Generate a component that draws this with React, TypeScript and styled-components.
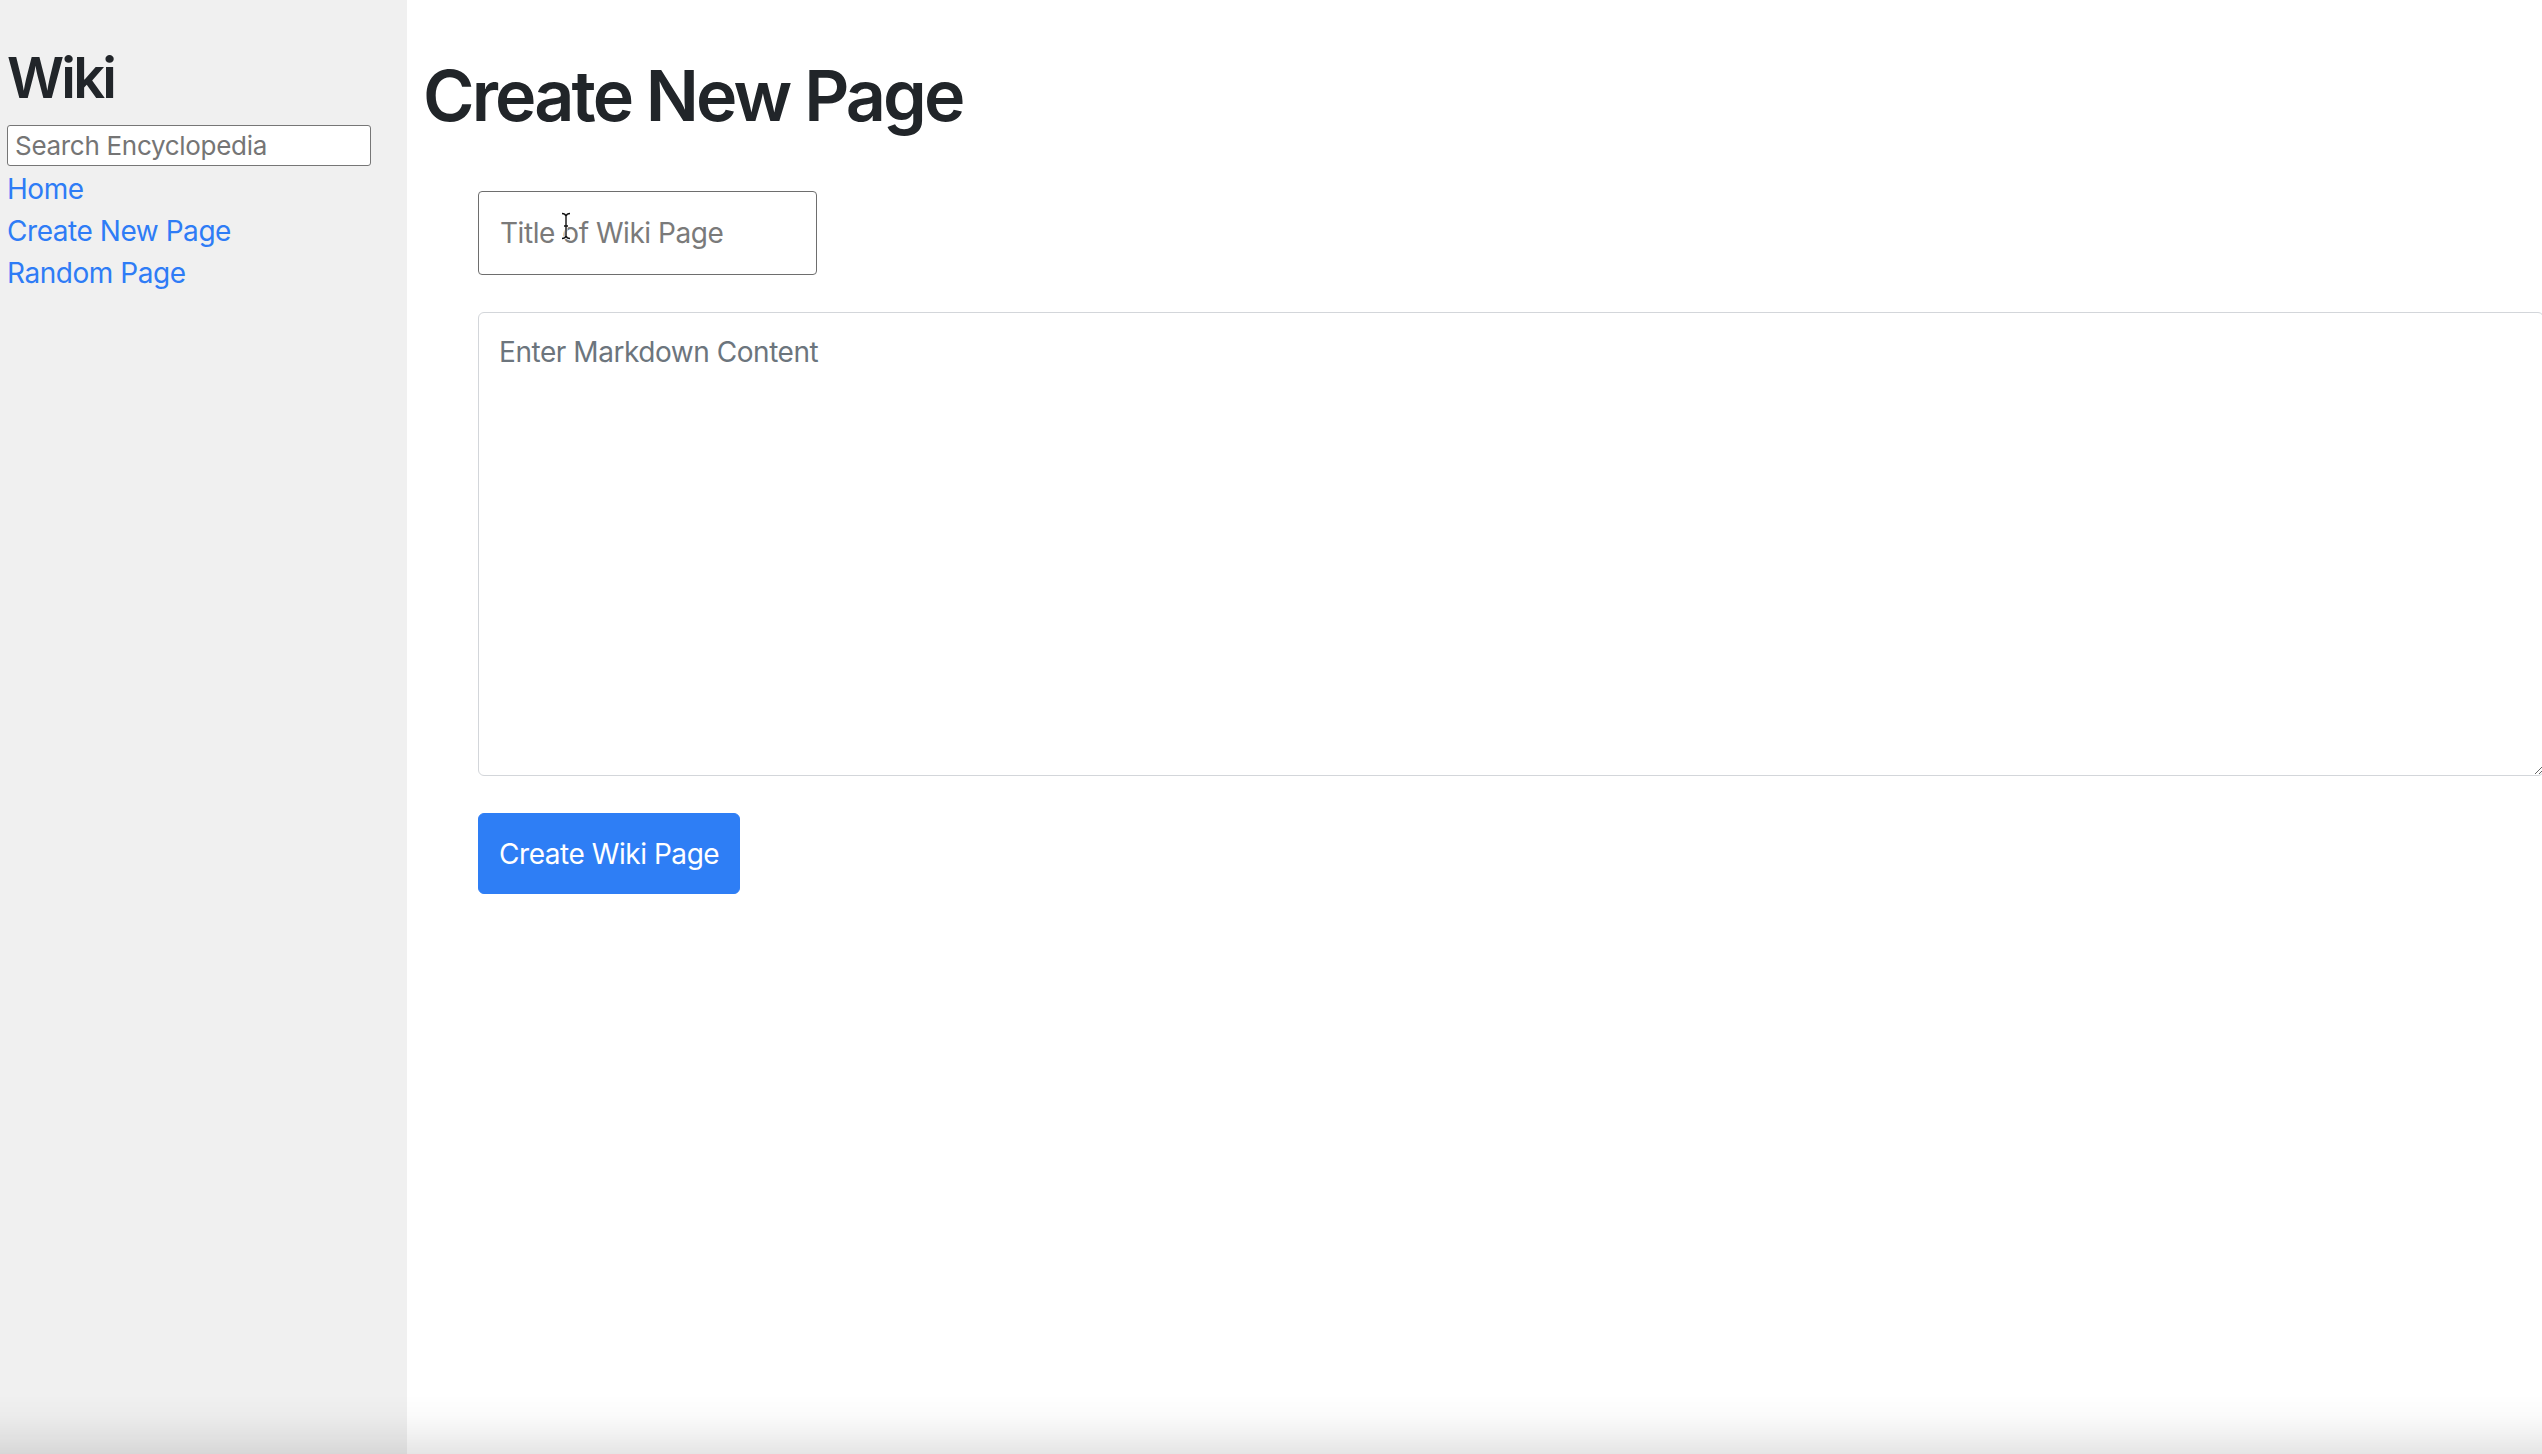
import React from "react";
import styled, { createGlobalStyle } from "styled-components";

const GlobalStyle = createGlobalStyle`
  html, body {
    margin: 0;
    padding: 0;
    height: 100%;
    overflow: hidden;
    background: #ffffff;
  }
  body {
    font-family: Inter, "Noto Sans", "Liberation Sans", sans-serif;
    color: #212529;
    font-size: 28px;
    line-height: 1.5;
  }
  * { box-sizing: border-box; }
`;

const Layout = styled.div`
  display: flex;
  min-height: 100vh;
  width: 100%;
`;

const Sidebar = styled.aside`
  flex: 0 0 407px;
  width: 407px;
  min-height: 100vh;
  background: #f0f0f0;
  padding: 45px 7px 0 7px;
  display: flex;
  flex-direction: column;
`;

const Brand = styled.h2`
  margin: 0 0 13px 0;
  font-size: 56px;
  font-weight: 600;
  line-height: 1.2;
  color: #212529;
  letter-spacing: -2.8px;
`;

const SearchInput = styled.input`
  width: 364px;
  height: 41px;
  margin: 0 0 2px 0;
  padding: 0 7px;
  border: 1px solid #767676;
  border-radius: 3px;
  background: #ffffff;
  font-family: Inter, "Noto Sans", sans-serif;
  font-size: 26px;
  letter-spacing: -0.3px;
  color: #212529;
  &::placeholder { color: #757575; }
  &:focus { outline: none; }
`;

const NavLink = styled.a`
  display: block;
  color: #2e7cf6;
  text-decoration: none;
  font-size: 28px;
  line-height: 42px;
  letter-spacing: -0.45px;
`;

const Main = styled.main`
  flex: 1 1 auto;
  padding: 54px 0 0 16px;
  min-width: 0;
`;

const PageTitle = styled.h1`
  margin: 0 0 53px 0;
  font-size: 70px;
  font-weight: 600;
  line-height: 1.2;
  color: #212529;
  letter-spacing: -2.9px;
`;

const Form = styled.form`
  display: flex;
  flex-direction: column;
  align-items: flex-start;
  gap: 37px;
  padding-left: 55px;
`;

const TitleField = styled.div`
  position: relative;
`;

const TitleInput = styled.input`
  display: block;
  width: 339px;
  height: 84px;
  padding: 0 21px;
  border: 1px solid #6e6e6e;
  border-radius: 4px;
  background: #ffffff;
  font-family: Inter, "Noto Sans", sans-serif;
  font-size: 28px;
  letter-spacing: -0.45px;
  color: #212529;
  &::placeholder { color: #7a7a7a; }
  &:focus { outline: none; }
`;

const Cursor = styled.svg`
  position: absolute;
  left: 82px;
  top: 21px;
  pointer-events: none;
`;

const ContentArea = styled.textarea`
  display: block;
  width: 2066px;
  height: 464px;
  padding: 18px 20px 16px;
  border: 1px solid #d3d6da;
  border-radius: 6px;
  background: #ffffff;
  font-family: Inter, "Noto Sans", sans-serif;
  font-size: 28px;
  line-height: 42px;
  letter-spacing: -0.45px;
  color: #212529;
  resize: vertical;
  &::placeholder { color: #6c757d; }
  &:focus { outline: none; }
`;

const SubmitButton = styled.button`
  height: 81px;
  padding: 0 20px;
  border: 1px solid #2e7ef5;
  border-radius: 6px;
  background: #2e7ef5;
  color: #ffffff;
  font-family: Inter, "Noto Sans", sans-serif;
  font-size: 28px;
  line-height: 42px;
  letter-spacing: -0.45px;
  cursor: pointer;
`;

const BottomShade = styled.div`
  position: fixed;
  left: 0;
  right: 0;
  bottom: 0;
  height: 60px;
  pointer-events: none;
  background: linear-gradient(
    to bottom,
    rgba(0, 0, 0, 0) 0%,
    rgba(0, 0, 0, 0.015) 35%,
    rgba(0, 0, 0, 0.05) 65%,
    rgba(0, 0, 0, 0.1) 100%
  );
`;

export default function App() {
  return (
    <>
      <GlobalStyle />
      <Layout>
        <Sidebar>
          <Brand>Wiki</Brand>
          <SearchInput type="text" placeholder="Search Encyclopedia" />
          <NavLink href="#">Home</NavLink>
          <NavLink href="#">Create New Page</NavLink>
          <NavLink href="#">Random Page</NavLink>
        </Sidebar>
        <Main>
          <PageTitle>Create New Page</PageTitle>
          <Form onSubmit={(e) => e.preventDefault()}>
            <TitleField>
              <TitleInput type="text" placeholder="Title of Wiki Page" />
              <Cursor width="12" height="28" viewBox="0 0 12 28">
                <path
                  d="M2 1.5 C4 1.5 5.5 2.5 6 4 C6.5 2.5 8 1.5 10 1.5 M6 4 V24 M2 26.5 C4 26.5 5.5 25.5 6 24 C6.5 25.5 8 26.5 10 26.5 M4 14 H8"
                  fill="none"
                  stroke="#ffffff"
                  strokeWidth="3"
                />
                <path
                  d="M2 1.5 C4 1.5 5.5 2.5 6 4 C6.5 2.5 8 1.5 10 1.5 M6 4 V24 M2 26.5 C4 26.5 5.5 25.5 6 24 C6.5 25.5 8 26.5 10 26.5 M4 14 H8"
                  fill="none"
                  stroke="#111111"
                  strokeWidth="1.4"
                />
              </Cursor>
            </TitleField>
            <ContentArea placeholder="Enter Markdown Content" />
            <SubmitButton type="submit">Create Wiki Page</SubmitButton>
          </Form>
        </Main>
      </Layout>
      <BottomShade />
    </>
  );
}
